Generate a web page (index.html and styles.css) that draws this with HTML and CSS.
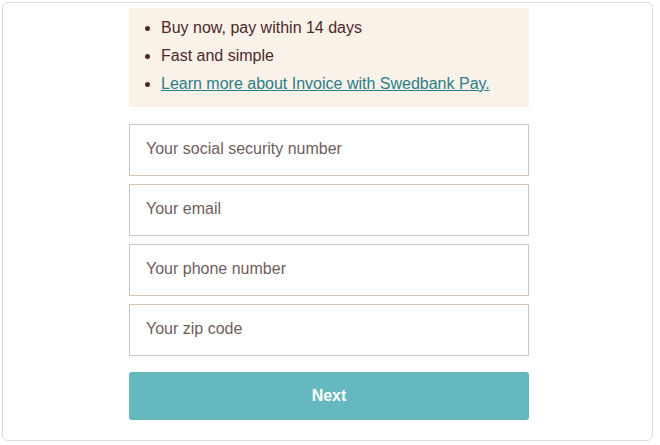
FILE: index.html
```html
<!DOCTYPE html>
<html lang="en">
<head>
<meta charset="utf-8">
<link rel="stylesheet" href="styles.css">
</head>
<body>
<div class="card">
  <div class="column">
    <ul class="info">
      <li>Buy now, pay within 14 days</li>
      <li>Fast and simple</li>
      <li><a href="#">Learn more about Invoice with Swedbank Pay.</a></li>
    </ul>
    <form class="form">
      <input class="field" type="text" placeholder="Your social security number">
      <input class="field" type="text" placeholder="Your email">
      <input class="field" type="text" placeholder="Your phone number">
      <input class="field" type="text" placeholder="Your zip code">
      <button class="next" type="button">Next</button>
    </form>
  </div>
</div>
</body>
</html>
```

FILE: styles.css
```css
html, body {
  margin: 0;
  padding: 0;
  background: #ffffff;
}
body {
  font-family: "Liberation Sans", Arial, sans-serif;
  font-size: 16px;
}
.card {
  margin: 2px 0 0 2px;
  width: 651px;
  height: 439px;
  box-sizing: border-box;
  border: 1px solid #dcdcdc;
  border-radius: 6px;
  padding-top: 5px;
}
.column {
  width: 400px;
  margin-left: 126px;
}
.info {
  margin: 0;
  background: #faf1e9;
  padding: 6px 0 9px 32px;
  color: #4b2a2a;
  line-height: 28px;
}
.info a {
  color: #2b7e88;
}
.form {
  display: flex;
  flex-direction: column;
  gap: 8px;
  margin-top: 17px;
}
.field {
  height: 52px;
  box-sizing: border-box;
  border: 1px solid #d4c4b9;
  border-radius: 0;
  padding: 0 16px 2px;
  font-family: "Liberation Sans", Arial, sans-serif;
  font-size: 16px;
  color: #4b2a2a;
  outline: none;
}
.field::placeholder {
  color: #6f5d5d;
  opacity: 1;
}
.next {
  margin-top: 8px;
  height: 48px;
  border: none;
  border-radius: 3px;
  background: #65b8bf;
  color: #ffffff;
  font-family: "Liberation Sans", Arial, sans-serif;
  font-size: 16px;
  font-weight: bold;
}
```
